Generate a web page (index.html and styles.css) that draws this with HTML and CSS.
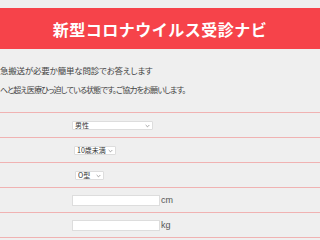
FILE: index.html
```html
<!DOCTYPE html>
<html lang="ja">
<head>
<meta charset="UTF-8">
<title>新型コロナウイルス受診ナビ</title>
<link rel="stylesheet" href="styles.css">
</head>
<body>
<header class="site-header">
    <h1>新型コロナウイルス受診ナビ</h1>
</header>
<div class="intro">
    <p class="lead">急搬送が必要か簡単な問診でお答えします</p>
    <p class="notice">へと超え医療ひっ迫している状態です。ご協力をお願いします。</p>
</div>
<form class="question-form">
    <div class="row">
        <span class="select-wrap">
            <select class="sel sel-sex"><option>男性</option><option>女性</option></select>
            <svg class="chevron" viewBox="0 0 6 4"><path d="M0.8 0.8 L3 3 L5.2 0.8" fill="none" stroke="#777" stroke-width="0.8"/></svg>
        </span>
    </div>
    <div class="row">
        <span class="select-wrap">
            <select class="sel sel-age"><option>10歳未満</option><option>10代</option></select>
            <svg class="chevron" viewBox="0 0 6 4"><path d="M0.8 0.8 L3 3 L5.2 0.8" fill="none" stroke="#777" stroke-width="0.8"/></svg>
        </span>
    </div>
    <div class="row">
        <span class="select-wrap">
            <select class="sel sel-blood"><option>O型</option><option>A型</option></select>
            <svg class="chevron" viewBox="0 0 6 4"><path d="M0.8 0.8 L3 3 L5.2 0.8" fill="none" stroke="#777" stroke-width="0.8"/></svg>
        </span>
    </div>
    <div class="row">
        <input type="text" class="num-input"><span class="unit">cm</span>
    </div>
    <div class="row">
        <input type="text" class="num-input"><span class="unit">kg</span>
    </div>
</form>
</body>
</html>
```
FILE: styles.css
```css
body {
    margin: 0;
    background: #efefef;
    font-family: "Noto Sans CJK JP", "Noto Sans", sans-serif;
    color: #444;
}

.site-header {
    margin-top: 8px;
    height: 41px;
    background: #f6434a;
    display: flex;
    align-items: center;
    justify-content: center;
}
.site-header h1 {
    margin: 0;
    color: #fff;
    font-size: 16px;
    font-weight: 700;
    letter-spacing: 0.5px;
}

.intro {
    margin: 11px 0 12px;
    font-size: 8.5px;
    font-feature-settings: "palt";
}
.intro p {
    margin: 0;
    line-height: 20px;
    white-space: nowrap;
}
.lead { letter-spacing: -0.2px; }
.notice { font-size: 8px; letter-spacing: -0.8px; }

.question-form {
    border-top: 1px solid #f0b2b2;
}
.row {
    height: 24px;
    border-bottom: 1px solid #f0b2b2;
    display: flex;
    align-items: center;
    padding-left: 72px;
}

.select-wrap {
    position: relative;
    display: inline-flex;
}
.sel {
    appearance: none;
    -webkit-appearance: none;
    height: 9px;
    padding: 0 0 0 2px;
    border: 1px solid #ddd;
    background: #fff;
    font-family: "Noto Sans CJK JP", sans-serif;
    font-size: 7px;
    line-height: 7px;
    color: #333;
    border-radius: 1px;
    box-sizing: border-box;
}
.sel-sex { width: 81px; }
.sel-age { width: 42px; margin-left: 2px; }
.sel-blood { width: 29px; margin-left: 3px; }
.chevron {
    position: absolute;
    right: 3px;
    top: 3px;
    width: 5px;
    height: 4px;
}

.num-input {
    width: 88px;
    height: 11px;
    padding: 0;
    border: 1px solid #ddd;
    background: #fff;
    box-sizing: border-box;
}
.unit {
    font-family: "Liberation Sans", sans-serif;
    font-size: 9px;
    color: #555;
    margin-left: 1px;
}
```
